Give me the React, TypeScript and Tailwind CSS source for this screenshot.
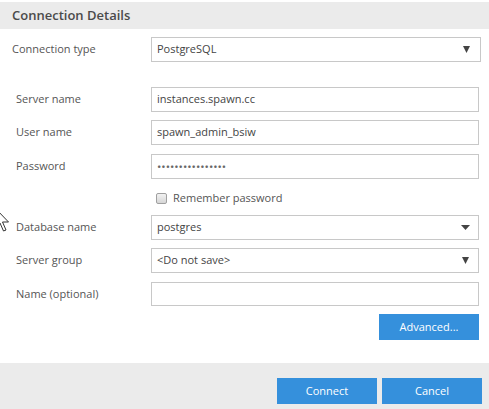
import React from 'react';

const font = { fontFamily: '"Open Sans", "Noto Sans", sans-serif' };

function Caret({ wide = false }: { wide?: boolean }) {
  // small solid triangle used by the dropdowns
  return wide ? (
    <svg width="9" height="5" viewBox="0 0 9 5" className="shrink-0">
      <path d="M0 0 H9 L4.5 5 Z" fill="#444" />
    </svg>
  ) : (
    <svg width="7" height="7" viewBox="0 0 7 7" className="shrink-0">
      <path d="M0 0 H7 L3.5 7 Z" fill="#444" />
    </svg>
  );
}

function Row({
  label,
  indent = true,
  className = '',
  children,
}: {
  label: string;
  indent?: boolean;
  className?: string;
  children: React.ReactNode;
}) {
  return (
    <div className={`flex items-center ${className}`}>
      <div className={`w-[151px] shrink-0 text-[11px] text-[#555] ${indent ? 'pl-4' : 'pl-3'}`}>{label}</div>
      {children}
    </div>
  );
}

function TextBox({ value = '', h = 'h-[25px]' }: { value?: string; h?: string }) {
  return (
    <div className={`flex w-[328px] items-center border border-[#c8c8c8] bg-white px-[5px] text-[11px] text-[#444] ${h}`}>
      {value}
    </div>
  );
}

function SelectBox({
  value,
  w = 'w-[328px]',
  wide = false,
  pr = 'pr-[9px]',
}: {
  value: string;
  w?: string;
  wide?: boolean;
  pr?: string;
}) {
  return (
    <div
      className={`flex h-[25px] items-center justify-between border border-[#c8c8c8] bg-white pl-[5px] text-[11px] text-[#444] ${w} ${pr}`}
    >
      <span>{value}</span>
      <Caret wide={wide} />
    </div>
  );
}

export default function App() {
  return (
    <div className="relative h-[409px] w-[489px] overflow-hidden bg-white" style={font}>
      {/* Header */}
      <div className="mt-[2px] flex h-[27px] items-center bg-[#ebebeb] pl-3 text-[13px] font-semibold text-[#4a4a4a]">
        Connection Details
      </div>

      <Row label="Connection type" indent={false} className="mt-[8px]">
        <SelectBox value="PostgreSQL" w="w-[330px]" pr="pr-[10px]" />
      </Row>

      <Row label="Server name" className="mt-[25px]">
        <TextBox value="instances.spawn.cc" />
      </Row>
      <Row label="User name" className="mt-[8px]">
        <TextBox value="spawn_admin_bsiw" />
      </Row>
      <Row label="Password" className="mt-[9px]">
        <div className="flex h-[25px] w-[328px] items-center border border-[#c8c8c8] bg-white px-[5px] text-[11.5px] text-[#666]">
          ••••••••••••••••
        </div>
      </Row>

      {/* Remember password */}
      <div className="mt-[9px] flex h-[20px] items-center pl-[156px]">
        <div className="h-[11px] w-[11px] rounded-[2px] border border-[#a0a0a0] bg-gradient-to-b from-[#f2f2f2] to-[#d6d6d6]" />
        <span className="ml-[6px] text-[11px] text-[#555]">Remember password</span>
      </div>

      <Row label="Database name" className="mt-[7px]">
        <SelectBox value="postgres" wide pr="pr-[8px]" />
      </Row>
      <Row label="Server group" className="mt-[8px]">
        <SelectBox value="<Do not save>" />
      </Row>
      <Row label="Name (optional)" className="mt-[9px]">
        <TextBox h="h-[24px]" />
      </Row>

      <div className="mt-[8px] flex justify-end pr-[10px]">
        <button className="h-[26px] w-[100px] bg-[#3590dc] text-[11px] text-white">Advanced...</button>
      </div>

      {/* Footer */}
      <div className="mt-[23px] flex h-[46px] items-start justify-end gap-[5px] bg-[#ebebeb] pr-[7px] pt-[15px]">
        <button className="h-[26px] w-[100px] bg-[#3590dc] text-[11px] text-white">Connect</button>
        <button className="h-[26px] w-[100px] bg-[#3590dc] text-[11px] text-white">Cancel</button>
      </div>

      {/* Mouse pointer, clipped at the left edge */}
      <svg className="absolute left-[-5px] top-[208px]" width="16" height="26" viewBox="0 0 16 26">
        <path
          d="M0.5 0.5 L0.5 19 L5 15 L8.5 23 L11 22 L7.5 14 L13.5 14 Z"
          fill="white"
          stroke="#333"
          strokeWidth="1"
        />
      </svg>
    </div>
  );
}
